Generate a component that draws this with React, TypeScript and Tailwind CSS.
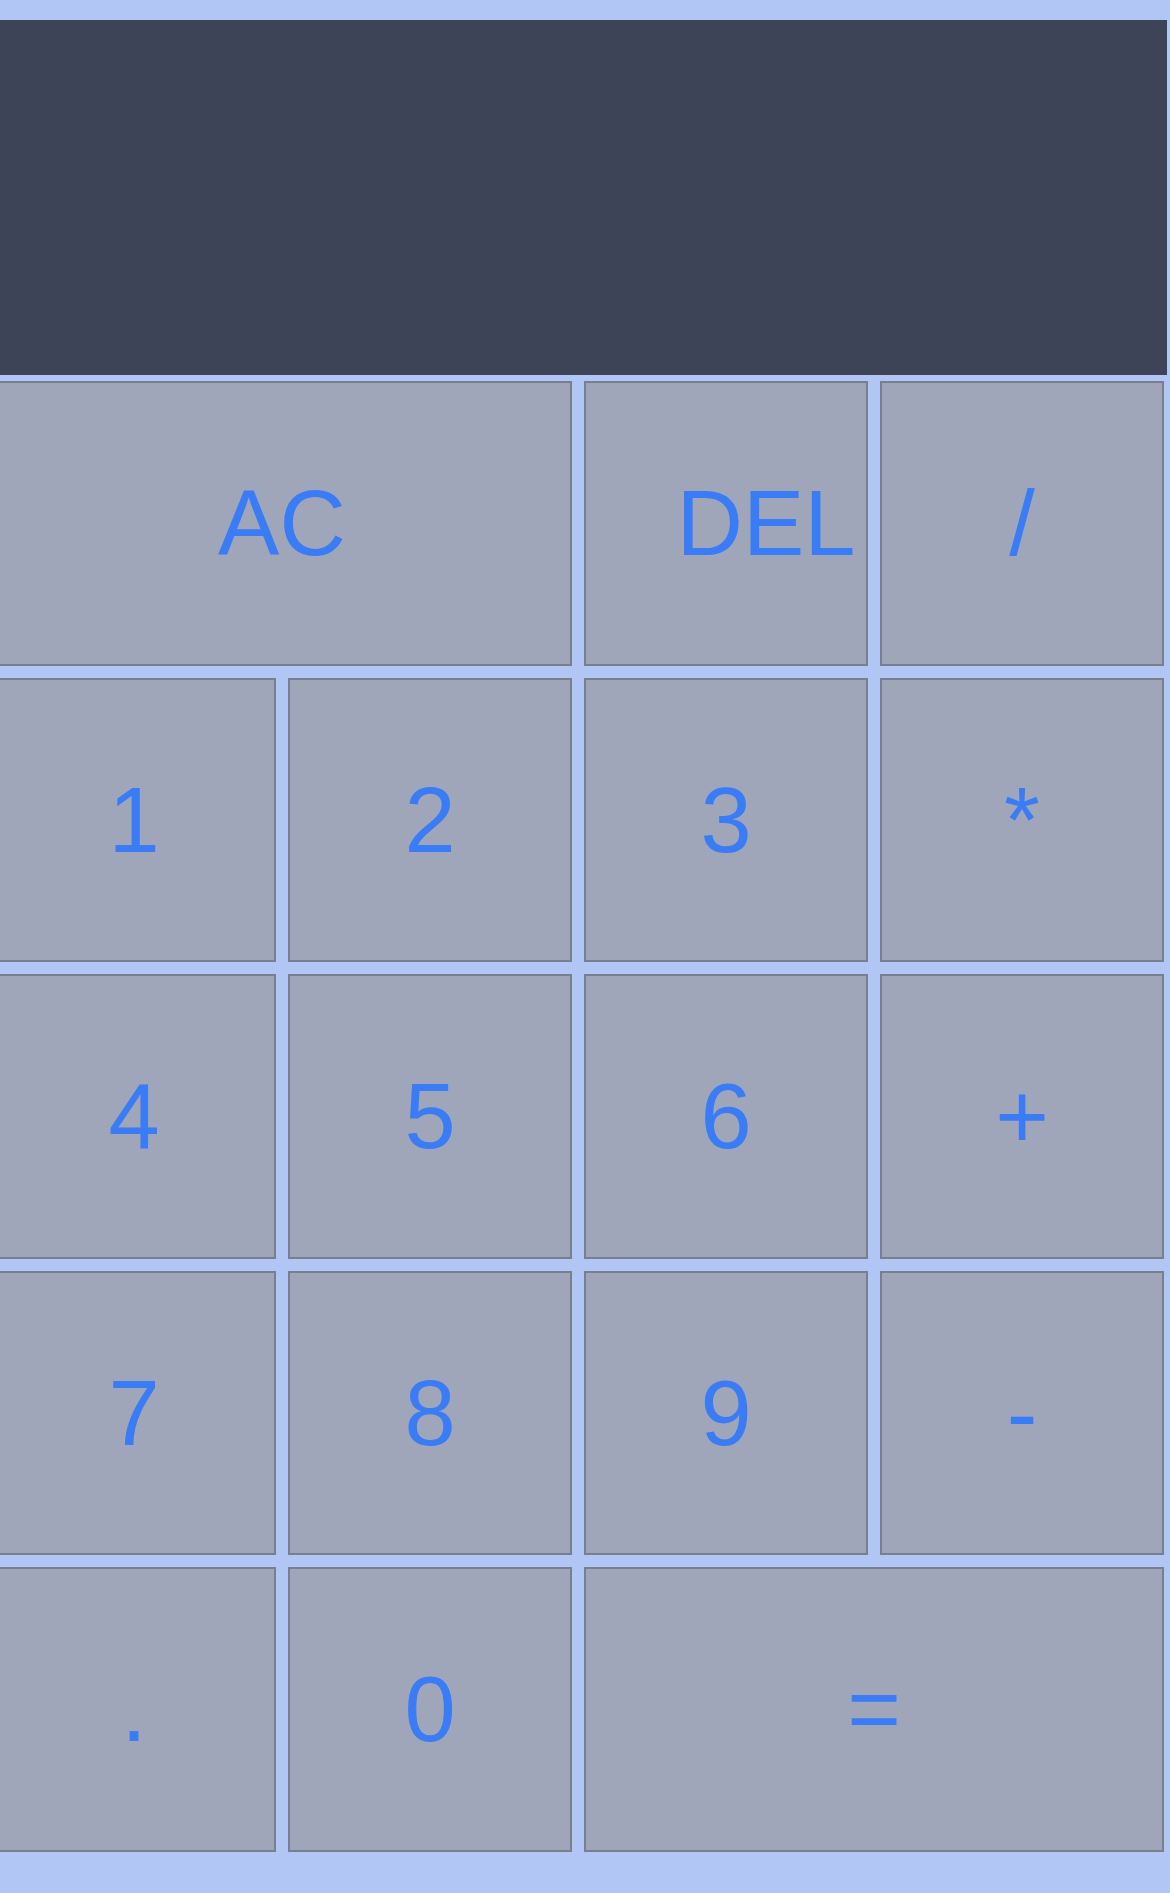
const keys = [
  { label: "AC", span: "col-span-2" },
  { label: "DEL", extra: "pl-[80px]" },
  { label: "/" },
  { label: "1" },
  { label: "2" },
  { label: "3" },
  { label: "*" },
  { label: "4" },
  { label: "5" },
  { label: "6" },
  { label: "+" },
  { label: "7" },
  { label: "8" },
  { label: "9" },
  { label: "-" },
  { label: "." },
  { label: "0" },
  { label: "=", span: "col-span-2" },
];

export default function App() {
  return (
    <main className="min-h-[1893px] w-[1170px] overflow-hidden bg-[#b2c6f6] pt-[20px] font-['Liberation_Sans',Arial,sans-serif]">
      {/* Display */}
      <div className="h-[355px] w-[1167px] bg-[#3e4457]" />

      {/* Keypad */}
      <div className="mt-[6px] ml-[-8px] grid grid-cols-[repeat(4,284px)] auto-rows-[284.5px] gap-x-[12px] gap-y-[12px]">
        {keys.map((k) => (
          <button
            key={k.label}
            className={`flex items-center justify-center border-2 border-[#778091] bg-[#a0a6ba] text-[92px] leading-none text-[#3a7cf6] ${k.span ?? ""} ${k.extra ?? ""}`}
          >
            {k.label}
          </button>
        ))}
      </div>
    </main>
  );
}
